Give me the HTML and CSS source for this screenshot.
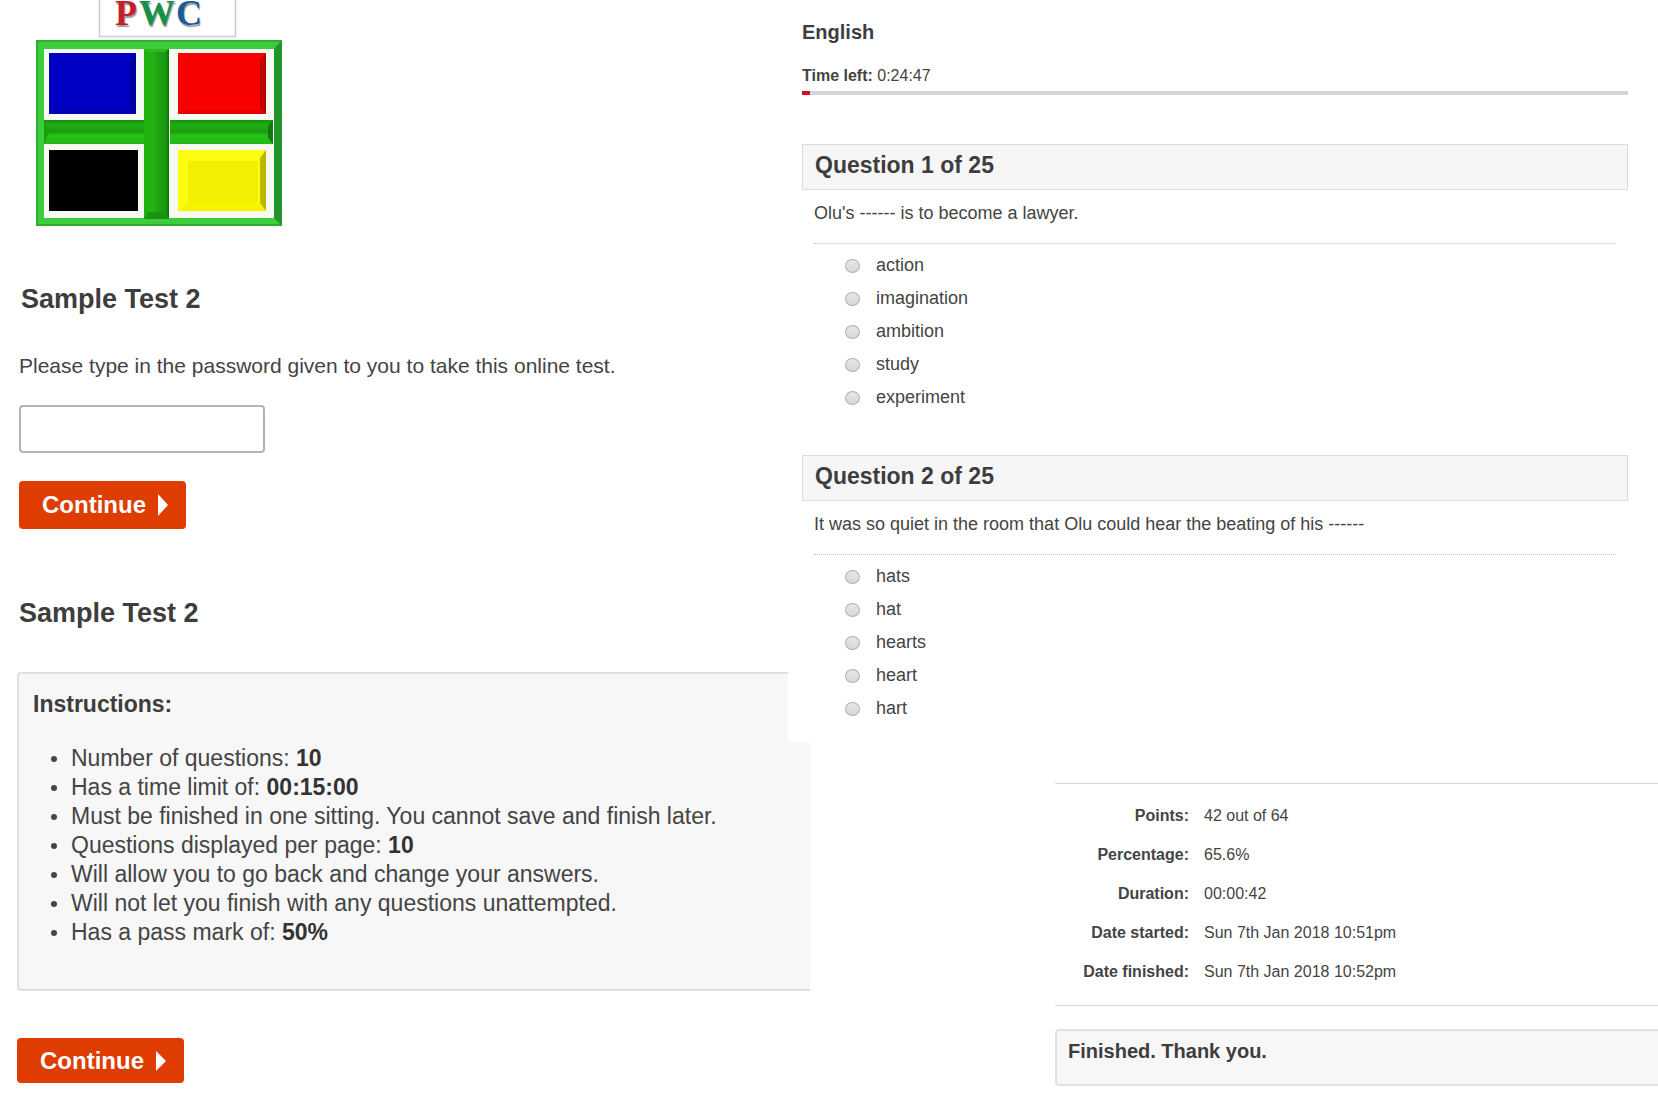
FILE: index.html
```
<!DOCTYPE html>
<html lang="en">
    <head>
        <meta charset="UTF-8">
        <meta name="viewport" content="width=device-width, initial-scale=1.0">
        <title>Sample Test 2</title>
        <link rel="stylesheet" href="styles.css">
    </head>
    <body>
        <main class="page">

            <!-- login and instructions -->
            <div class="start">
                <svg class="logo" width="270" height="230" viewBox="17 0 270 230" role="img" aria-label="PWC">
                    <defs>
                        <linearGradient id="bar-v" x1="0" x2="1" y1="0" y2="0">
                            <stop offset="0" stop-color="#20b010"/>
                            <stop offset="0.35" stop-color="#22b414"/>
                            <stop offset="0.6" stop-color="#1ea012"/>
                            <stop offset="0.85" stop-color="#1a9a10"/>
                            <stop offset="1" stop-color="#0c700a"/>
                        </linearGradient>
                        <linearGradient id="bar-h" x1="0" x2="0" y1="0" y2="1">
                            <stop offset="0" stop-color="#169010"/>
                            <stop offset="0.2" stop-color="#20b014"/>
                            <stop offset="0.5" stop-color="#1a9c10"/>
                            <stop offset="0.65" stop-color="#26c418"/>
                            <stop offset="1" stop-color="#22b814"/>
                        </linearGradient>
                    </defs>
                    <path d="M99.500 0V36.500H235.500V0" fill="#fff" stroke="#ccc" stroke-width="1.500"/>
                    <g class="logo-text">
                        <text x="115" y="25" fill="#c4202c">P</text>
                        <text x="139" y="25" fill="#12934a">W</text>
                        <text x="176" y="25" fill="#1d5a9a">C</text>
                    </g>
                    <rect x="36" y="40" width="246" height="186" fill="#3ccc3c"/>
                    <path d="M282 40V226L274 218V49Z" fill="#22942a"/>
                    <path d="M36 40H282L281 42H38V226H36Z" fill="#2cae30"/>
                    <path d="M36 226V224H280L282 226Z" fill="#2cae30"/>
                    <rect x="44" y="49" width="230" height="169" fill="#f5faf3"/>
                    <rect x="44" y="120" width="100" height="24" fill="url(#bar-h)"/>
                    <rect x="170" y="120" width="103" height="24" fill="url(#bar-h)"/>
                    <path d="M273 120V144L268 138V126Z" fill="#117a0c"/>
                    <path d="M44 120L49 132L44 144Z" fill="#1a9c10"/>
                    <rect x="144" y="49" width="25" height="170" fill="url(#bar-v)"/>
                    <path d="M144 49H169L165 52H148Z" fill="#2cb820"/>
                    <path d="M144 219H169L165 212H148Z" fill="#1a9410"/>
                    <rect x="49" y="53" width="87" height="61" fill="#0000c4"/>
                    <path d="M136 53V114L130 108V59Z" fill="#00009a"/>
                    <path d="M49 114H136L130 109H55Z" fill="#0000b6"/>
                    <rect x="178" y="53" width="88" height="61" fill="#f80000"/>
                    <path d="M266 53V114L260 108V59Z" fill="#c00000"/>
                    <path d="M178 114H266L260 109H184Z" fill="#ee0000"/>
                    <rect x="49" y="150" width="89" height="61" fill="#000"/>
                    <rect x="178" y="150" width="88" height="61" fill="#fcfc10"/>
                    <rect x="188" y="161" width="70" height="41" fill="#f2f000"/>
                    <path d="M266 150V211L260 203V158Z" fill="#bcb800"/>
                    <path d="M178 211H266L258 202H188Z" fill="#f8f400"/>
                </svg>

                <form class="login">
                    <h1>Sample Test 2</h1>
                    <label for="password">Please type in the password given to you to take this online test.</label>
                    <input type="password" name="password" id="password">
                    <button type="button" class="btn">Continue
                        <svg width="10" height="22" viewBox="0 0 10 22" aria-hidden="true"><path d="M0 0L10 11L0 22Z" fill="#fff"/></svg>
                    </button>
                </form>

                <section class="intro">
                    <h2>Sample Test 2</h2>
                    <div class="instructions">
                        <h3>Instructions:</h3>
                        <ul>
                            <li>Number of questions: <b>10</b></li>
                            <li>Has a time limit of: <b>00:15:00</b></li>
                            <li>Must be finished in one sitting. You cannot save and finish later.</li>
                            <li>Questions displayed per page: <b>10</b></li>
                            <li>Will allow you to go back and change your answers.</li>
                            <li>Will not let you finish with any questions unattempted.</li>
                            <li>Has a pass mark of: <b>50%</b></li>
                        </ul>
                    </div>
                    <button type="button" class="btn btn-small">Continue
                        <svg width="10" height="20" viewBox="0 0 10 20" aria-hidden="true"><path d="M0 0L10 10L0 20Z" fill="#fff"/></svg>
                    </button>
                </section>
            </div>

            <div class="test">
                <!-- questions -->
                <form class="exam">
                    <h2>English</h2>
                    <p class="time" id="time"><b>Time left:</b> 0:24:47</p>
                    <progress value="1" max="100" aria-labelledby="time"></progress>

                    <section class="question">
                        <h3>Question 1 of 25</h3>
                        <p>Olu's ------ is to become a lawyer.</p>
                        <div class="options">
                            <label><input type="radio" name="q1">action</label>
                            <label><input type="radio" name="q1">imagination</label>
                            <label><input type="radio" name="q1">ambition</label>
                            <label><input type="radio" name="q1">study</label>
                            <label><input type="radio" name="q1">experiment</label>
                        </div>
                    </section>

                    <section class="question">
                        <h3>Question 2 of 25</h3>
                        <p>It was so quiet in the room that Olu could hear the beating of his ------</p>
                        <div class="options">
                            <label><input type="radio" name="q2">hats</label>
                            <label><input type="radio" name="q2">hat</label>
                            <label><input type="radio" name="q2">hearts</label>
                            <label><input type="radio" name="q2">heart</label>
                            <label><input type="radio" name="q2">hart</label>
                        </div>
                    </section>
                </form>

                <!-- results -->
                <section class="results">
                    <div class="score">
                        <table>
                            <tbody>
                                <tr><th scope="row">Points:</th><td>42 out of 64</td></tr>
                                <tr><th scope="row">Percentage:</th><td>65.6%</td></tr>
                                <tr><th scope="row">Duration:</th><td>00:00:42</td></tr>
                                <tr><th scope="row">Date started:</th><td>Sun 7th Jan 2018 10:51pm</td></tr>
                                <tr><th scope="row">Date finished:</th><td>Sun 7th Jan 2018 10:52pm</td></tr>
                            </tbody>
                        </table>
                    </div>
                    <p class="finished">Finished. Thank you.</p>
                </section>
            </div>
        </main>
    </body>
</html>
```
FILE: styles.css
```
*{
    margin: 0;
    padding: 0;
    box-sizing: border-box;
}
body{
    background-color: #ffffff;
    color: #444444;
    font-family: "Liberation Sans", Arial, sans-serif;
    font-size: 16px;
}
h1,h2,h3,.finished{
    color: #3d3d3d;
    font-weight: bold;
}
.page{
    display: grid;
    grid-template-columns: minmax(0, 788fr) minmax(0, 870fr);
}

/* left side */
.start{
    padding-left: 17px;
}
.logo{
    display: block;
}
.logo-text{
    font-family: "Liberation Serif", "Times New Roman", serif;
    font-size: 36px;
    font-weight: bold;
    text-shadow: 1px 2px 1px #999999;
}
.login{
    display: flex;
    flex-direction: column;
    align-items: flex-start;
    padding: 53px 0 0 2px;
}
h1{
    padding-left: 2px;
    font-size: 27px;
    line-height: 32px;
}
.login label{
    margin-top: 35px;
    font-size: 21px;
    line-height: 32px;
}
.login input{
    width: 246px;
    height: 48px;
    margin: 23px 0 28px;
    padding: 0 10px;
    border: 2px solid #b4b4b4;
    border-radius: 4px;
    font-size: 21px;
}
.btn{
    display: flex;
    align-items: center;
    gap: 12px;
    height: 48px;
    padding: 0 18px 0 23px;
    border: none;
    border-radius: 4px;
    background-color: #de3c00;
    color: #ffffff;
    font-family: inherit;
    font-size: 24px;
    font-weight: bold;
}
.btn-small{
    height: 45px;
}
.intro h2{
    margin-top: 68px;
    padding-left: 2px;
    font-size: 27px;
    line-height: 32px;
}
/* runs on below the question panel */
.instructions{
    margin: 43px -22px 47px 0;
    padding: 16px 14px 42px;
    border: 2px solid #dfdfdf;
    border-right: none;
    border-radius: 4px 0 0 4px;
    background-color: #f7f7f7;
    font-size: 23px;
    line-height: 29px;
}
.instructions h3{
    font-size: 23px;
}
.instructions ul{
    margin-top: 25px;
    list-style: none;
}
.instructions li{
    display: flex;
    align-items: center;
    white-space: pre;
}
.instructions li::before{
    content: "";
    width: 6px;
    height: 6px;
    margin: 0 14px 0 18px;
    border-radius: 50%;
    background-color: #444444;
}
.instructions b{
    color: #333333;
}

/* right side */
.exam{
    position: relative;
    padding: 20px 30px 17px 14px;
    background-color: #ffffff;
}
.exam h2{
    font-size: 20px;
    line-height: 24px;
}
.time{
    margin-top: 20px;
    line-height: 24px;
}
progress{
    display: block;
    width: 100%;
    height: 4px;
    margin-top: 3px;
    border: none;
    appearance: none;
    background-color: #d6d6d6;
}
progress::-webkit-progress-bar{
    background-color: #d6d6d6;
}
progress::-webkit-progress-value{
    background-color: #d01020;
}
.question{
    margin-top: 41px;
    font-size: 18px;
}
progress + .question{
    margin-top: 49px;
}
.question h3{
    padding: 6px 12px 10px;
    border: 1px solid #dcdcdc;
    background-color: #f6f6f6;
    font-size: 23px;
    line-height: 28px;
}
.question p{
    margin: 11px 12px 0;
    padding-bottom: 18px;
    border-bottom: 1px dotted #c4c4c4;
    line-height: 24px;
}
.options{
    margin: 5px 12px 0;
    padding-left: 31px;
}
.options label{
    display: flex;
    align-items: center;
    gap: 16px;
    height: 33px;
}
.options input{
    width: 15px;
    height: 14px;
    border: 1px solid #b0b0b0;
    border-radius: 50%;
    appearance: none;
    background: linear-gradient(#e6e6e6, #d8d8d8);
}
.options input:checked{
    background: #444444;
}

.results{
    margin: 41px 0 0 267px;
}
.score{
    padding: 12px 0 14px;
    border-top: 1px solid #d8d8d8;
    border-bottom: 1px solid #d8d8d8;
}
table{
    border-collapse: collapse;
}
tr{
    height: 39px;
}
th{
    width: 134px;
    text-align: right;
}
td{
    padding-left: 15px;
}
.finished{
    margin-top: 23px;
    padding: 9px 11px 22px;
    border: 2px solid #e2e2e2;
    border-right: none;
    border-radius: 4px 0 0 4px;
    background-color: #f7f7f7;
    font-size: 20px;
    line-height: 22px;
}
```
